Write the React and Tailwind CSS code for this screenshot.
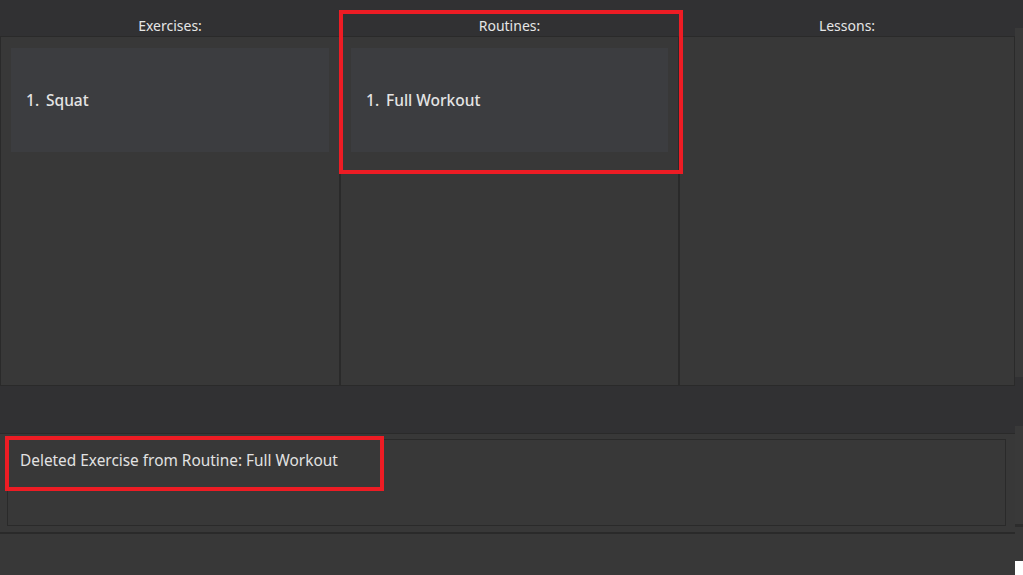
import React from 'react';

const columns = [
    { title: 'Exercises:', items: ['Squat'] },
    { title: 'Routines:', items: ['Full Workout'] },
    { title: 'Lessons:', items: [] },
];

function ListCard({ index, name }) {
    return (
        <div className="h-[104px] bg-[#3c3d40] flex items-center pl-[15px] pt-[2px] text-[15.5px] font-medium text-[#e4e4e4]">
            <span className="w-[20px]">{index}.</span>
            <span>{name}</span>
        </div>
    );
}

export default function App() {
    return (
        <div
            className="relative w-[1023px] h-[575px] flex bg-[#383838] overflow-hidden"
            style={{ fontFamily: '"Noto Sans", "Open Sans", sans-serif' }}
        >
            <div className="w-[1015px] flex flex-col">
                {/* column titles */}
                <div className="h-[37px] bg-[#313133] grid grid-cols-[340px_339px_1fr] border-b border-[#2a2a2a]">
                    {columns.map(col => (
                        <div key={col.title} className="flex items-end justify-center text-[14px] text-[#e6e6e6]">
                            {col.title}
                        </div>
                    ))}
                </div>

                {/* list panels */}
                <div className="h-[349px] grid grid-cols-[340px_339px_1fr]">
                    {columns.map(col => (
                        <div key={col.title} className="border border-t-0 border-[#2a2a2a] bg-[#383838] px-[10px] pt-[11px]">
                            {col.items.map((item, i) => (
                                <ListCard key={item} index={i + 1} name={item} />
                            ))}
                        </div>
                    ))}
                </div>

                {/* command box area */}
                <div className="h-[48px] bg-[#313133] border-b border-[#2a2a2a]" />

                {/* result display */}
                <div className="h-[100px] pl-[7px] pr-[9px] pt-[5px] pb-[6px] border-b-2 border-[#2a2a2a]">
                    <div className="h-full border border-[#2a2a2a] px-[12px] pt-[9px] text-[15.4px] text-[#e2e2e2]">
                        Deleted Exercise from Routine: Full Workout
                    </div>
                </div>

                {/* status bar */}
                <div className="flex-1 bg-[#383838]" />
            </div>

            {/* right edge strip */}
            <div className="w-[8px] flex flex-col">
                <div className="h-[28px] bg-[#313133]" />
                <div className="h-[349px] bg-[#393939]" />
                <div className="h-[49px] bg-[#313133]" />
                <div className="h-[98px] bg-[#393939]" />
                <div className="h-[3px] bg-[#2c2c2c]" />
                <div className="h-[34px] bg-[#383838]" />
                <div className="flex-1 bg-white" />
            </div>

            {/* annotation highlights */}
            <div className="absolute left-[339px] top-[10px] w-[344px] h-[164px] border-4 border-[#ed1c24]" />
            <div className="absolute left-[5px] top-[436px] w-[379px] h-[55px] border-4 border-[#ed1c24]" />
        </div>
    );
}
